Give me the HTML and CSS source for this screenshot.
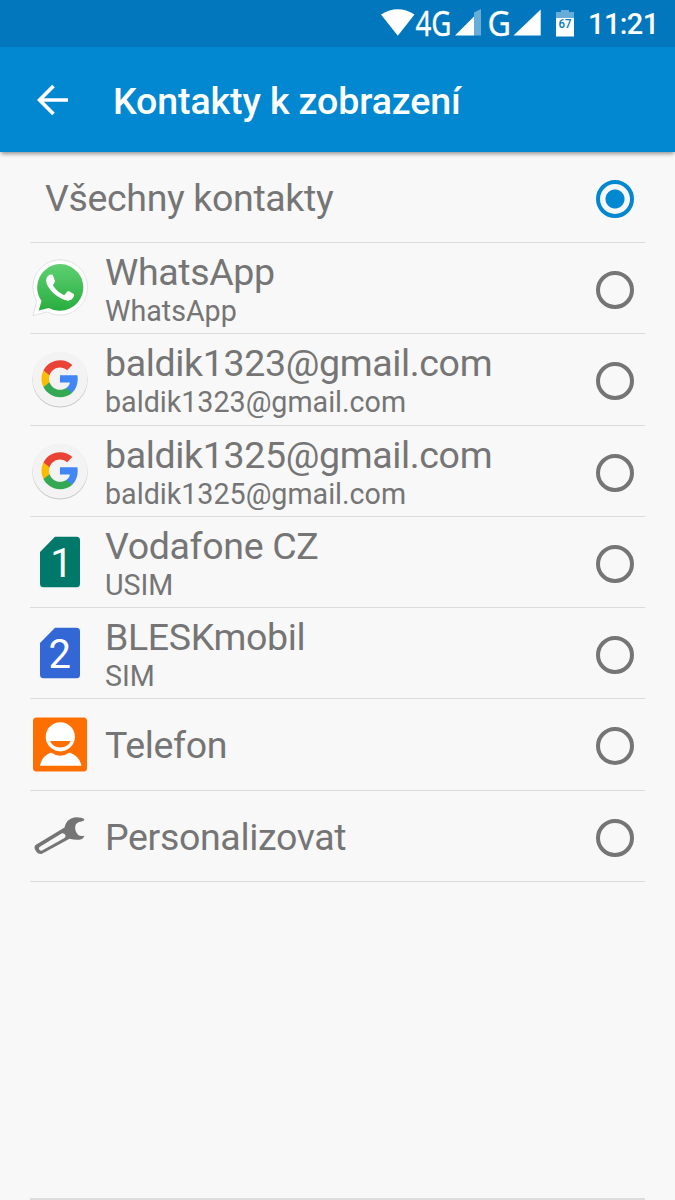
FILE: index.html
```html
<!DOCTYPE html>
<html lang="cs">
  <head>
    <meta charset="UTF-8" />
    <meta name="viewport" content="width=device-width, initial-scale=1.0" />
    <title>Kontakty k zobrazení</title>
    <link rel="stylesheet" href="styles.css">
  </head>
  <body>
    <div class="status-bar">
      <svg class="status-icons" viewBox="0 0 205 47">
        <path class="white" d="M6 14.500Q23 4 39.500 14.500L22.800 35.700Z" />
        <text class="signal-text" x="40.500" y="35.800" textLength="36" lengthAdjust="spacingAndGlyphs">4G</text>
        <path class="faded" d="M99 12.500L106 9v26.500h-7z" />
        <path class="white" d="M80 35.500L99 16.500v19z" />
        <text class="signal-text" x="112.500" y="35.800" textLength="23.500" lengthAdjust="spacingAndGlyphs">G</text>
        <path class="white" d="M138.500 35.500L165.700 9.500v26z" />
        <path class="faded" d="M181 19v-7h5v-2h8v2h5v7z" />
        <path class="white" d="M181 18h18v18.500h-18z" />
        <text class="battery-text" x="183.500" y="28" textLength="13" lengthAdjust="spacingAndGlyphs">67</text>
      </svg>
      <span class="clock">11:21</span>
    </div>
    <div class="toolbar">
      <svg class="back" viewBox="0 0 32 32">
        <path d="M31 16H3M16.500 2L2.500 16l14 14" />
      </svg>
      <h1>Kontakty k zobrazení</h1>
    </div>

    <div class="list">
      <div class="row all">
        <div class="label"><span class="name">Všechny kontakty</span></div>
        <span class="radio checked"></span>
      </div>
      <div class="row">
        <svg class="icon" viewBox="0 0 60 60">
          <defs>
            <linearGradient id="wa" x1="0" y1="0" x2="0" y2="1">
              <stop offset="0" stop-color="#5fd072" />
              <stop offset="1" stop-color="#29ad3f" />
            </linearGradient>
          </defs>
          <path class="bubble" d="M30.300 1.700A27.700 27.700 0 1 1 17 53.900L3 57.700L6.700 43.500A27.700 27.700 0 0 1 30.300 1.700Z" />
          <path fill="url(#wa)" d="M30 6A23.400 23.400 0 1 1 18.800 50L8.700 52.500L11.500 43A23.400 23.400 0 0 1 30 6Z" />
          <path class="white" d="M17.500 18.500Q19.500 15.500 22.500 16.800Q23.500 18.500 25 23Q25 24.300 22.800 27.200Q27 34 34.200 37.200L37.300 33.600Q38 33 39 33.300L43.800 36Q44.500 36.800 43.700 38.800Q42 42.200 38 42.700C30 42 20 33.500 16.800 26Q15.200 21.500 17.500 18.500Z" />
        </svg>
        <div class="label">
          <span class="name">WhatsApp</span>
          <span class="type">WhatsApp</span>
        </div>
        <span class="radio"></span>
      </div>
      <div class="row">
        <svg class="icon" viewBox="0 0 60 60">
          <g id="google">
            <circle class="disc-shadow" cx="30" cy="30.800" r="27.700" />
            <circle class="disc" cx="30" cy="30" r="27.500" />
            <g transform="translate(9.800 9.500) scale(1.680)">
              <path fill="#4285f4" d="M22.560 12.250c0-.780-.070-1.530-.200-2.250H12v4.260h5.920c-.260 1.370-1.040 2.530-2.210 3.310v2.770h3.570c2.080-1.920 3.280-4.740 3.280-8.090z" />
              <path fill="#34a853" d="M12 23c2.970 0 5.460-.980 7.280-2.660l-3.570-2.770c-.980.660-2.230 1.060-3.710 1.060-2.860 0-5.290-1.930-6.160-4.530H2.180v2.840C3.990 20.530 7.700 23 12 23z" />
              <path fill="#fbbc05" d="M5.840 14.090c-.220-.660-.350-1.360-.350-2.090s.130-1.430.350-2.090V7.070H2.180C1.430 8.550 1 10.220 1 12s.430 3.450 1.180 4.930l3.660-2.840z" />
              <path fill="#ea4335" d="M12 5.380c1.620 0 3.060.560 4.210 1.640l3.150-3.150C17.450 2.090 14.970 1 12 1 7.700 1 3.990 3.470 2.180 7.070l3.660 2.840c.870-2.600 3.300-4.530 6.160-4.530z" />
            </g>
          </g>
        </svg>
        <div class="label">
          <span class="name">baldik1323@gmail.com</span>
          <span class="type">baldik1323@gmail.com</span>
        </div>
        <span class="radio"></span>
      </div>
      <div class="row">
        <svg class="icon" viewBox="0 0 60 60"><use href="#google" /></svg>
        <div class="label">
          <span class="name">baldik1325@gmail.com</span>
          <span class="type">baldik1325@gmail.com</span>
        </div>
        <span class="radio"></span>
      </div>
      <div class="row">
        <svg class="icon" viewBox="0 0 60 60">
          <path class="sim" d="M25 4.700H46.500Q50 4.700 50 8.200V51.700Q50 55.200 46.500 55.200H13.500Q10 55.200 10 51.700V20Z" />
          <text class="sim-number" x="31.500" y="44.500" text-anchor="middle">1</text>
        </svg>
        <div class="label">
          <span class="name">Vodafone CZ</span>
          <span class="type">USIM</span>
        </div>
        <span class="radio"></span>
      </div>
      <div class="row">
        <svg class="icon" viewBox="0 0 60 60">
          <path class="sim second" d="M25 4.700H46.500Q50 4.700 50 8.200V51.700Q50 55.200 46.500 55.200H13.500Q10 55.200 10 51.700V20Z" />
          <text class="sim-number" x="29.700" y="44.500" text-anchor="middle">2</text>
        </svg>
        <div class="label">
          <span class="name">BLESKmobil</span>
          <span class="type">SIM</span>
        </div>
        <span class="radio"></span>
      </div>
      <div class="row">
        <svg class="icon" viewBox="0 0 60 60">
          <rect class="orange" x="3" y="3.500" width="54" height="54" rx="3.500" />
          <circle class="white" cx="30.300" cy="22.800" r="14.600" />
          <path class="orange" d="M20 27H40.700Q37.500 33.500 30.300 33.500T20 27Z" />
          <path class="white" d="M10 51.800Q11.500 42 21 38.500Q30.300 45 39.600 38.500Q49.500 42 51.500 51.800Z" />
        </svg>
        <div class="label"><span class="name">Telefon</span></div>
        <span class="radio"></span>
      </div>
      <div class="row">
        <svg class="icon" viewBox="0 0 60 60">
          <path class="wrench" d="M54.500 13Q54.300 15.200 51.500 15.500Q46 16 45.300 20Q44.500 25.500 48.500 29.300Q51 30.500 54.400 29.700Q53.500 33.200 49.500 33.700Q44.500 34.200 39.500 32.700L11.500 48Q8.500 48.500 6.200 45.500Q3.200 41.500 5.500 39L34.500 21.500Q36.500 13 44 11.500Q50 10.700 54.500 13Z" />
          <path class="hollow" d="M9.500 41L32 27.300Q34.500 27 35.500 29.500Q35.500 31.200 34.500 32L12 44.600Q9.500 45 9 43Q8.800 41.800 9.500 41Z" />
        </svg>
        <div class="label"><span class="name">Personalizovat</span></div>
        <span class="radio"></span>
      </div>
    </div>
    <div class="bottom-line"></div>
  </body>
</html>
```

FILE: styles.css
```css
* {
  padding: 0;
  margin: 0;
  box-sizing: border-box;
}

body {
  height: 1200px;
  display: flex;
  flex-direction: column;
  overflow: hidden;
  background-color: #f8f8f8;
  color: #757575;
  font-family: Roboto, sans-serif;
}

.status-bar {
  height: 47px;
  flex-shrink: 0;
  display: flex;
  justify-content: flex-end;
  align-items: center;
  padding-right: 16px;
  background-color: #0277bd;
  color: #fff;
}

.status-icons {
  width: 205px;
  height: 47px;
}

.white {
  fill: #fff;
}

.faded {
  fill: #68add8;
}

.signal-text {
  fill: #fff;
  stroke: #fff;
  stroke-width: 0.300;
  font-family: "Noto Sans", sans-serif;
  font-size: 34px;
}

.battery-text {
  fill: #0277bd;
  font-size: 13.500px;
  font-weight: 500;
}

.clock {
  width: 79px;
  padding-left: 8px;
  padding-top: 1px;
  font-size: 29px;
  font-weight: 500;
  letter-spacing: -0.600px;
  white-space: nowrap;
}

.toolbar {
  height: 105px;
  flex-shrink: 0;
  display: flex;
  align-items: center;
  gap: 44px;
  padding-left: 37px;
  background-color: #0288d1;
  box-shadow: 0 3px 4px -1px rgba(0, 0, 0, 0.4);
  color: #fff;
}

.back {
  width: 32px;
  height: 32px;
  fill: none;
  stroke: #fff;
  stroke-width: 3.700;
}

h1 {
  font-size: 37.500px;
  font-weight: 500;
  line-height: 44px;
  letter-spacing: -0.100px;
  padding-top: 2px;
}

.list {
  padding: 0 30px;
}

.row {
  height: 91.250px;
  display: flex;
  align-items: center;
  border-bottom: 1px solid #dcdcdc;
}

.all {
  height: 91px;
  padding-left: 15px;
}

.icon {
  width: 60px;
  height: 60px;
  margin-right: 15px;
}

.label {
  flex: 1;
  display: flex;
  flex-direction: column;
  padding-top: 2px;
}

.name {
  font-size: 37.500px;
  line-height: 44px;
  letter-spacing: -0.350px;
}

.type {
  font-size: 28.650px;
  line-height: 34px;
}

.radio {
  width: 38px;
  height: 38px;
  margin: 4px 11px 0 0;
  border: 4px solid #757575;
  border-radius: 50%;
}

.checked {
  border-color: #0288d1;
  background: radial-gradient(circle, #0288d1 9px, transparent 10px);
}

.bubble {
  fill: #fff;
  stroke: #dfd9df;
  stroke-width: 0.800;
}

.disc {
  fill: #f3f3f3;
}

.disc-shadow {
  fill: #c9c9c9;
}

.sim {
  fill: #00796b;
}

.second {
  fill: #3367d6;
}

.sim-number {
  fill: #fff;
  font-size: 40px;
}

.orange {
  fill: #ff6f00;
}

.wrench {
  fill: #757575;
}

.hollow {
  fill: #f8f8f8;
}

.bottom-line {
  height: 2px;
  flex-shrink: 0;
  margin: auto 30px 0;
  background-color: #dcdcdc;
}
```
